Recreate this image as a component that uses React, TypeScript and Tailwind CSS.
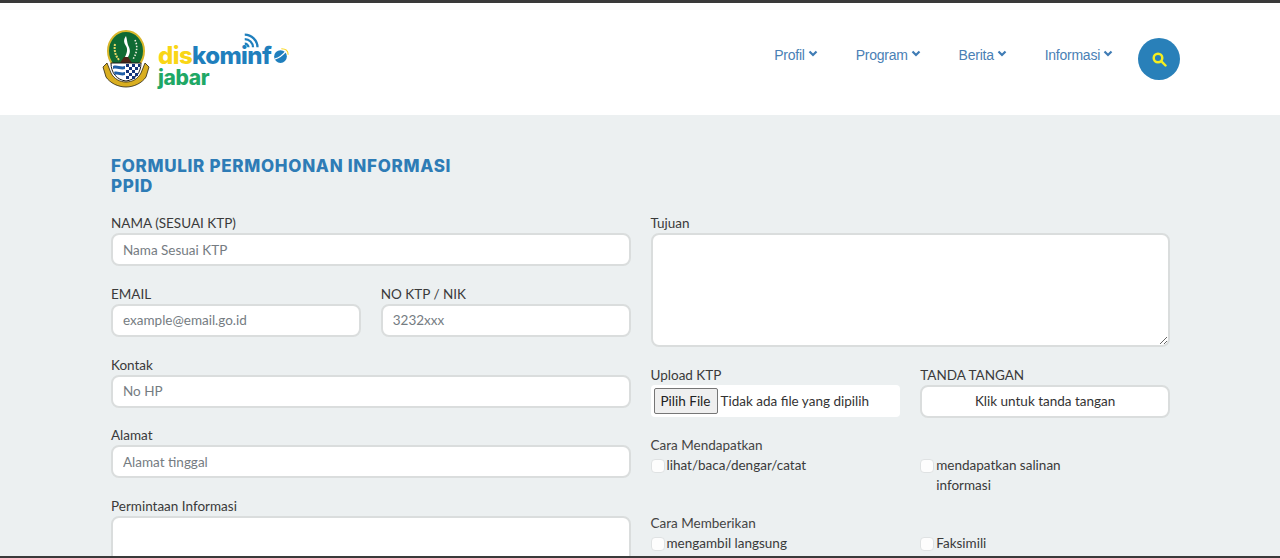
import React from "react";

const lato = "font-['Lato',sans-serif]";
const labelCls = "block h-[20px] text-[13.5px] leading-[20px] text-[#3a3a3a]";
const inputCls = "block w-full h-[33px] rounded-[8px] border-2 border-[#dadddd] bg-white px-[10px] text-[13.5px] text-[#333] placeholder:text-[#757c82] outline-none";

function Field({ label, placeholder }: { label: string; placeholder: string }) {
  return (
    <div className="mb-[17.75px] min-w-0 flex-1">
      <label className={labelCls}>{label}</label>
      <input className={inputCls} placeholder={placeholder} />
    </div>
  );
}

function Check({ children }: { children: React.ReactNode }) {
  return (
    <label className="flex items-start text-[13.5px] leading-[20px] text-[#3a3a3a]">
      <input type="checkbox" className="mt-[4px] mr-[2px] h-[14px] w-[14px] shrink-0 appearance-none rounded-[4px] border border-[#dfe2e3] bg-[#fdfdfd]" />
      <span className="max-w-[150px]">{children}</span>
    </label>
  );
}

function Logo() {
  return (
    <div className="flex items-start">
      <svg width="48" height="58" viewBox="0 0 48 58" className="shrink-0">
        <ellipse cx="24" cy="21" rx="18" ry="20" fill="#0f6a33" stroke="#d8b62a" strokeWidth="2" />
        <path d="M24 6c-3 4-2 7 0 10 2 3 1 7-1 11h3c3-5 2-8 0-12-1-3-1-6-2-9z" fill="#fff" />
        <path d="M13 14c-1 6 0 11 4 16" stroke="#e7d767" strokeWidth="2" strokeDasharray="2 1" fill="none" />
        <path d="M33 10c3 6 2 13-2 19" stroke="#f1efe0" strokeWidth="1.6" strokeDasharray="1.5 1.5" fill="none" />
        <path d="M18 33l4-6h4l4 6z" fill="#4b2417" />
        <path d="M9 33h30c0 10-6 17-15 18-9-1-15-8-15-18z" fill="#fff" stroke="#1d1d1b" />
        <path d="M11 36c4-1.500 8 1.500 12 0v3c-4 1.500-8-1.500-12 0zM12 42c3-1.500 7 1.500 11 0v3c-4 1.500-7-1.500-10 0z" fill="#1f5fa8" />
        <path d="M24 34h3v3h-3zM30 34h3v3h-3zM36 34h2v3h-2zM27 37h3v3h-3zM33 37h3v3h-3zM24 40h3v3h-3zM30 40h3v3h-3zM27 43h3v3h-3zM33 43h3v3h-3zM24 46h3v3h-3zM30 46h3v3h-3z" fill="#14357a" />
        <path d="M1 37l4-4 4 10c3 6 9 9 15 9s12-3 15-9l4-10 4 4-3 10c-4 6-12 10-20 10S8 53 4 47z" fill="#d9ae20" stroke="#2b2410" strokeWidth="0.8" />
      </svg>
      <div className="relative ml-[8px] h-[58px] w-[134px] font-['Inter',sans-serif] font-extrabold">
        <div className="absolute left-0 top-[15px] flex items-center text-[24px] leading-[22px] tracking-[-0.6px]">
          <span className="text-[#f9d616]">dis</span>
          <span className="text-[#1f7fbd]">kominf</span>
        </div>
        <svg width="17" height="17" viewBox="0 0 20 20" className="absolute left-[114px] top-[18px]">
          <circle cx="10" cy="10" r="7.5" fill="#1f7fbd" />
          <path d="M3 13C7 12 13 8 17 3" stroke="#fff" strokeWidth="1.5" fill="none" />
          <path d="M11 1c4 0 8 2 8 7" stroke="#f9d616" strokeWidth="1.2" fill="none" />
        </svg>
        <svg width="15" height="15" viewBox="0 0 20 20" className="absolute left-[86px] top-[3px]">
          <g fill="none" stroke="#1f7fbd" strokeWidth="3">
            <path d="M1 2c9 0 17 8 17 17" />
            <path d="M1 8c6 0 11 5 11 11" />
            <path d="M1 14c2 0 5 2 5 5" />
          </g>
        </svg>
        <div className="absolute left-0 top-[38px] text-[21px] leading-[20px] tracking-[-0.4px] text-[#1fa866]">jabar</div>
      </div>
    </div>
  );
}

function NavItem({ label }: { label: string }) {
  return (
    <a className="mb-[8px] mr-[38px] flex items-center text-[14px] tracking-[-0.25px] text-[#4a7fb5] font-['Liberation_Sans',sans-serif] last-of-type:mr-[25px]">
      {label}
      <svg width="10" height="8" viewBox="0 0 10 8" fill="none" stroke="#3f7cb5" strokeWidth="2.2" className="ml-[3px] mb-[2px]">
        <path d="M1.500 1.500L5 5L8.500 1.500" />
      </svg>
    </a>
  );
}

export default function App() {
  return (
    <div className={`flex h-[558px] flex-col overflow-hidden bg-[#ecf0f1] ${lato}`}>
      <div className="h-[3px] shrink-0 bg-[#3a3a3a]" />
      <header className="flex h-[112px] shrink-0 items-start bg-white pl-[102px] pr-[100px]">
        <div className="mt-[27px]"><Logo /></div>
        <nav className="ml-auto mt-[35px] flex items-center">
          <NavItem label="Profil" />
          <NavItem label="Program" />
          <NavItem label="Berita" />
          <NavItem label="Informasi" />
          <button className="flex h-[42px] w-[42px] items-center justify-center rounded-full bg-[#2980b9]">
            <svg width="15" height="15" viewBox="0 0 14 14" fill="none" stroke="#f6ee1f" strokeWidth="2.3" strokeLinecap="round">
              <circle cx="5.600" cy="5.600" r="4" />
              <path d="M8.800 8.800L12.600 12.600" />
            </svg>
          </button>
        </nav>
      </header>
      <main className="min-h-0 flex-1 overflow-hidden pl-[111px] pr-[110px] pt-[41px]">
        <h1 className="mb-[17px] w-[400px] font-['Inter',sans-serif] text-[17px] font-extrabold leading-[20px] tracking-[0.7px] text-[#2e7cb6]">
          FORMULIR PERMOHONAN INFORMASI<br />PPID
        </h1>
        <div className="grid grid-cols-2 gap-x-[20px]">
          <div>
            <Field label="NAMA (SESUAI KTP)" placeholder="Nama Sesuai KTP" />
            <div className="flex gap-[20px]">
              <Field label="EMAIL" placeholder="example@email.go.id" />
              <Field label="NO KTP / NIK" placeholder="3232xxx" />
            </div>
            <Field label="Kontak" placeholder="No HP" />
            <Field label="Alamat" placeholder="Alamat tinggal" />
            <div>
              <label className={labelCls}>Permintaan Informasi</label>
              <textarea className="block h-[114px] w-full rounded-[8px] border-2 border-[#dadddd] bg-white outline-none" />
            </div>
          </div>
          <div>
            <div className="mb-[18px]">
              <label className={labelCls}>Tujuan</label>
              <textarea className="block h-[114px] w-full rounded-[8px] border-2 border-[#dadddd] bg-white outline-none" />
            </div>
            <div className="mb-[17px] flex gap-[20px]">
              <div className="min-w-0 flex-1">
                <label className={labelCls}>Upload KTP</label>
                <div className="flex h-[32px] items-center rounded-[4px] bg-white pl-[3px] text-[13.5px] text-[#333]">
                  <button className="h-[26px] w-[64px] rounded-[2px] border border-[#767676] bg-[#efefef] text-[13.5px] text-[#222]">Pilih File</button>
                  <span className="ml-[3px]">Tidak ada file yang dipilih</span>
                </div>
              </div>
              <div className="min-w-0 flex-1">
                <label className={labelCls}>TANDA TANGAN</label>
                <button className="block h-[33px] w-full rounded-[8px] border-2 border-[#dadddd] bg-white text-center text-[13.5px] text-[#333]">Klik untuk tanda tangan</button>
              </div>
            </div>
            <div className="h-[20px] text-[13.5px] leading-[20px] text-[#444]">Cara Mendapatkan</div>
            <div className="mb-[18px] grid grid-cols-2 gap-x-[20px]">
              <Check>lihat/baca/dengar/catat</Check>
              <Check>mendapatkan salinan informasi</Check>
            </div>
            <div className="h-[20px] text-[13.5px] leading-[20px] text-[#444]">Cara Memberikan</div>
            <div className="grid grid-cols-2 gap-x-[20px]">
              <Check>mengambil langsung</Check>
              <Check>Faksimili</Check>
            </div>
          </div>
        </div>
      </main>
      <div className="h-[2px] shrink-0 bg-[#3a3a3a]" />
    </div>
  );
}
